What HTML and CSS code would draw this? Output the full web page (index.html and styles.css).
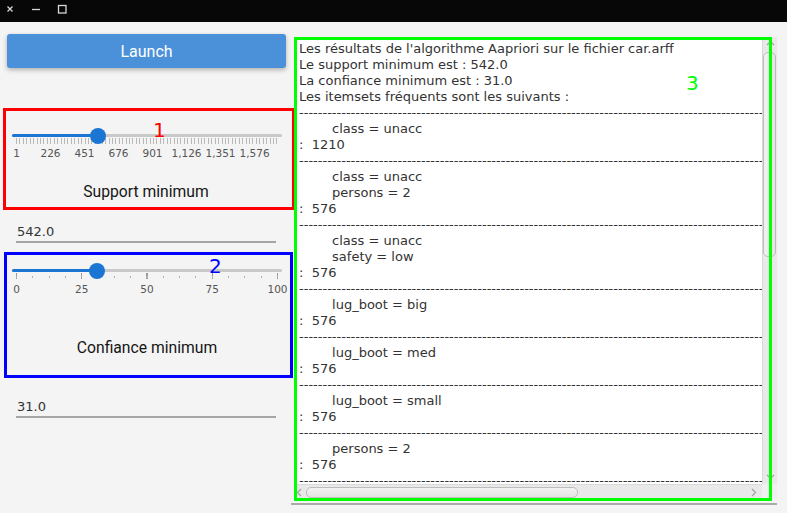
FILE: index.html
```html
<!DOCTYPE html>
<html lang="fr">
<head>
<meta charset="utf-8">
<title>Apriori</title>
<link rel="stylesheet" href="styles.css">
</head>
<body>
<div class="titlebar">
  <svg class="tb-icons" width="80" height="22" viewBox="0 0 80 22">
    <path d="M7.5 6.5 L12.5 11.5 M12.5 6.5 L7.5 11.5" stroke="#d8d8d8" stroke-width="1.3" fill="none"/>
    <path d="M32 9.5 H40" stroke="#d8d8d8" stroke-width="1.3"/>
    <rect x="58.5" y="5.5" width="7.5" height="7.5" stroke="#d8d8d8" stroke-width="1.3" fill="none"/>
  </svg>
</div>
<div class="main">
  <div class="left">
    <button class="launch">Launch</button>

    <div class="box box-red">
      <span class="anno anno-red">1</span>
      <div class="slider">
        <div class="track"></div>
        <div class="scale">
          <div class="fill" style="width: calc(4.5px + 31.33%)"></div>
          <div class="ticks ticks-dense"></div>
          <span class="lbl" style="left: 0%">1</span>
          <span class="lbl" style="left: 13.03%">226</span>
          <span class="lbl" style="left: 26.06%">451</span>
          <span class="lbl" style="left: 39.09%">676</span>
          <span class="lbl" style="left: 52.11%">901</span>
          <span class="lbl" style="left: 65.14%">1,126</span>
          <span class="lbl" style="left: 78.17%">1,351</span>
          <span class="lbl" style="left: 91.2%">1,576</span>
          <div class="thumb" style="left: 31.33%"></div>
        </div>
      </div>
      <div class="caption caption-red">Support minimum</div>
    </div>

    <div class="field field-1">542.0</div>

    <div class="box box-blue">
      <span class="anno anno-blue">2</span>
      <div class="slider slider-2">
        <div class="track"></div>
        <div class="scale">
          <div class="fill" style="width: calc(4.5px + 31%)"></div>
          <div class="ticks ticks-major"></div>
          <div class="ticks ticks-minor"></div>
          <span class="lbl lbl-2" style="left: 0%">0</span>
          <span class="lbl lbl-2" style="left: 25%">25</span>
          <span class="lbl lbl-2" style="left: 50%">50</span>
          <span class="lbl lbl-2" style="left: 75%">75</span>
          <span class="lbl lbl-2" style="left: 100%">100</span>
          <div class="thumb" style="left: 31%"></div>
        </div>
      </div>
      <div class="caption caption-blue">Confiance minimum</div>
    </div>

    <div class="field field-2">31.0</div>
  </div>

  <div class="right">
    <div class="ta">
      <div class="content">Les résultats de l'algorithme Aapriori sur le fichier car.arff
Le support minimum est : 542.0
La confiance minimum est : 31.0
Les itemsets fréquents sont les suivants :
------------------------------------------------------------------------------------------------------------------------------------
	class = unacc
:  1210
------------------------------------------------------------------------------------------------------------------------------------
	class = unacc
	persons = 2
:  576
------------------------------------------------------------------------------------------------------------------------------------
	class = unacc
	safety = low
:  576
------------------------------------------------------------------------------------------------------------------------------------
	lug_boot = big
:  576
------------------------------------------------------------------------------------------------------------------------------------
	lug_boot = med
:  576
------------------------------------------------------------------------------------------------------------------------------------
	lug_boot = small
:  576
------------------------------------------------------------------------------------------------------------------------------------
	persons = 2
:  576
------------------------------------------------------------------------------------------------------------------------------------
	persons = 4
:  576</div>
      <div class="vscroll">
        <svg class="arr arr-up" width="9" height="6" viewBox="0 0 9 6"><path d="M1 5 L4.5 1.5 L8 5" stroke="#a0a0a0" stroke-width="1.2" fill="none"/></svg>
        <div class="vthumb"></div>
        <svg class="arr arr-down" width="9" height="6" viewBox="0 0 9 6"><path d="M1 1 L4.5 4.5 L8 1" stroke="#a0a0a0" stroke-width="1.2" fill="none"/></svg>
      </div>
      <div class="hscroll">
        <svg class="arr arr-left" width="6" height="9" viewBox="0 0 6 9"><path d="M5 1 L1.5 4.5 L5 8" stroke="#a0a0a0" stroke-width="1.2" fill="none"/></svg>
        <div class="hthumb"></div>
        <svg class="arr arr-right" width="6" height="9" viewBox="0 0 6 9"><path d="M1 1 L4.5 4.5 L1 8" stroke="#a0a0a0" stroke-width="1.2" fill="none"/></svg>
      </div>
      <div class="corner"></div>
    </div>
    <div class="ta-line"></div>
    <div class="green"><span class="anno anno-green">3</span></div>
  </div>
</div>
</body>
</html>
```

FILE: styles.css
```css
html, body {
  margin: 0;
  padding: 0;
}
body {
  width: 787px;
  height: 513px;
  overflow: hidden;
  background: #f4f4f4;
  font-family: Roboto, "Noto Sans", sans-serif;
}

.titlebar {
  height: 22px;
  background: #070707;
}
.tb-icons {
  display: block;
}

.main {
  display: flex;
  height: 491px;
}

.left {
  width: 291px;
  flex: none;
}

.launch {
  display: block;
  margin: 12px 0 0 7px;
  width: 279px;
  height: 34px;
  border: none;
  border-radius: 3px;
  background: #4a91da;
  color: #fff;
  font-family: Roboto, "Noto Sans", sans-serif;
  font-size: 16px;
  padding: 0;
  box-shadow: 0 2px 5px rgba(0, 0, 0, 0.28);
}

.box {
  position: relative;
  box-sizing: border-box;
}
.box-red {
  margin: 40px 0 0 3px;
  width: 292px;
  height: 102px;
  border: 3px solid #ff0000;
  padding-top: 16px;
}
.box-blue {
  margin: 9px 0 0 4px;
  width: 289px;
  height: 126px;
  border: 3px solid #0000ff;
  padding-top: 7px;
}

.anno {
  position: absolute;
  font-family: "DejaVu Sans", sans-serif;
  font-size: 20px;
  line-height: 20px;
  z-index: 5;
}
.anno-red {
  color: #ff0000;
  left: 147px;
  top: 9px;
}
.anno-blue {
  color: #0000ff;
  left: 202px;
  top: 1px;
}
.anno-green {
  color: #00ff00;
  left: 389px;
  top: 33px;
}

.slider {
  position: relative;
  width: 270px;
  height: 36px;
  margin-left: 6px;
}
.slider-2 {
  margin-left: 5px;
}
.track {
  position: absolute;
  left: 0;
  right: 0;
  top: 7px;
  height: 3px;
  border-radius: 2px;
  background: #c9c9c9;
}
.scale {
  position: absolute;
  left: 4.5px;
  width: 261px;
  top: 0;
  bottom: 0;
}
.fill {
  position: absolute;
  left: -4.5px;
  top: 7px;
  height: 3px;
  border-radius: 2px;
  background: #1b75d3;
}
.thumb {
  position: absolute;
  top: 0.5px;
  width: 16px;
  height: 16px;
  border-radius: 50%;
  background: #1b75d3;
  transform: translateX(-50%);
}
.ticks {
  position: absolute;
  left: -0.5px;
  width: 262px;
}
.ticks-dense {
  top: 11px;
  height: 6px;
  background: repeating-linear-gradient(to right, #b8b8b8 0 1px, transparent 1px 3.4263px);
}
.ticks-major {
  top: 11px;
  height: 6px;
  background: repeating-linear-gradient(to right, #9a9a9a 0 1px, transparent 1px 65.25px);
}
.ticks-minor {
  top: 14px;
  height: 2px;
  background: repeating-linear-gradient(to right, #b0b0b0 0 1px, transparent 1px 16.3125px);
}
.lbl {
  position: absolute;
  top: 20px;
  transform: translateX(-50%);
  font-family: "DejaVu Sans", sans-serif;
  font-size: 10.5px;
  line-height: 12px;
  color: #555;
  white-space: nowrap;
}
.lbl-2 {
  top: 21px;
}

.caption {
  text-align: center;
  font-size: 15.7px;
  line-height: 20px;
  color: #151515;
}
.caption-red {
  margin-top: 19px;
  padding-right: 6px;
}
.caption-blue {
  margin-top: 40px;
  padding-right: 3px;
}

.field {
  margin-left: 16px;
  width: 259px;
  padding-left: 1px;
  height: 20px;
  line-height: 21px;
  border-bottom: 2px solid #a6a6a6;
  font-family: "DejaVu Sans", sans-serif;
  font-size: 13px;
  color: #333;
}
.field-1 {
  margin-top: 11px;
}
.field-2 {
  margin-top: 18px;
}

.right {
  position: relative;
  width: 486px;
  flex: none;
  padding-top: 15px;
}
.ta {
  margin-left: 3px;
  width: 483px;
  height: 462px;
  display: grid;
  grid-template-columns: 1fr 15px;
  grid-template-rows: 1fr 15px;
  background: #ececec;
}
.content {
  background: #fff;
  overflow: hidden;
  padding: 4px 0 0 5px;
  font-family: "DejaVu Sans", sans-serif;
  font-size: 13px;
  line-height: 16px;
  color: #333;
  white-space: pre;
  tab-size: 8;
}
.vscroll {
  position: relative;
  background: #e9e9e9;
  border-left: 1px solid #d9d9d9;
}
.vthumb {
  position: absolute;
  left: 0;
  top: 15px;
  width: 11px;
  height: 203px;
  border: 1px solid #bdbdbd;
  border-radius: 5px;
  background: linear-gradient(to right, #f2f2f2, #e4e4e4);
}
.hscroll {
  position: relative;
  background: #e9e9e9;
  border-top: 1px solid #d9d9d9;
}
.hthumb {
  position: absolute;
  left: 12px;
  top: 2px;
  width: 270px;
  height: 9px;
  border: 1px solid #bdbdbd;
  border-radius: 5px;
  background: linear-gradient(to bottom, #f2f2f2, #e4e4e4);
}
.corner {
  background: #f0f0f0;
}
.arr {
  position: absolute;
  display: block;
}
.arr-up {
  left: 3px;
  top: 3px;
}
.arr-down {
  left: 3px;
  bottom: 4px;
}
.arr-left {
  left: 2px;
  top: 3px;
}
.arr-right {
  right: 5px;
  top: 3px;
}
.ta-line {
  margin-top: 4px;
  height: 2px;
  background: #a9a9a9;
}
.green {
  position: absolute;
  left: 3px;
  top: 15px;
  width: 478px;
  height: 464px;
  box-sizing: border-box;
  border: 3px solid #00ff00;
  pointer-events: none;
}
```
